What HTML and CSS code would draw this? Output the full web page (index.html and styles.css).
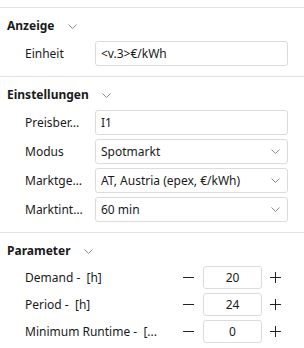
FILE: index.html
```html
<!DOCTYPE html>
<html lang="de">
<head>
    <meta charset="UTF-8">
    <title>Einstellungen</title>
    <link rel="stylesheet" href="styles.css">
</head>
<body>

<div class="panel">
    <div class="section">
        <div class="section-head">
            <span class="section-title">Anzeige</span>
            <svg class="chev" width="9" height="5" viewBox="0 0 9 5"><path d="M0.5 0.5 L4.5 4.5 L8.5 0.5" fill="none" stroke="#8a8a8a" stroke-width="1"/></svg>
        </div>
        <div class="rows">
            <div class="field-row">
                <div class="label">Einheit</div>
                <div class="box">&lt;v.3&gt;€/kWh</div>
            </div>
        </div>
    </div>

    <div class="section">
        <div class="section-head">
            <span class="section-title">Einstellungen</span>
            <svg class="chev" width="9" height="5" viewBox="0 0 9 5"><path d="M0.5 0.5 L4.5 4.5 L8.5 0.5" fill="none" stroke="#8a8a8a" stroke-width="1"/></svg>
        </div>
        <div class="rows">
            <div class="field-row">
                <div class="label">Preisber…</div>
                <div class="box">I1</div>
            </div>
            <div class="field-row">
                <div class="label">Modus</div>
                <div class="box select"><span>Spotmarkt</span><svg width="9" height="5" viewBox="0 0 9 5"><path d="M0.5 0.5 L4.5 4.5 L8.5 0.5" fill="none" stroke="#8a8a8a" stroke-width="1"/></svg></div>
            </div>
            <div class="field-row">
                <div class="label">Marktge…</div>
                <div class="box select"><span>AT, Austria (epex, €/kWh)</span><svg width="9" height="5" viewBox="0 0 9 5"><path d="M0.5 0.5 L4.5 4.5 L8.5 0.5" fill="none" stroke="#8a8a8a" stroke-width="1"/></svg></div>
            </div>
            <div class="field-row">
                <div class="label">Marktint…</div>
                <div class="box select"><span>60 min</span><svg width="9" height="5" viewBox="0 0 9 5"><path d="M0.5 0.5 L4.5 4.5 L8.5 0.5" fill="none" stroke="#8a8a8a" stroke-width="1"/></svg></div>
            </div>
        </div>
    </div>

    <div class="section">
        <div class="section-head">
            <span class="section-title">Parameter</span>
            <svg class="chev" width="9" height="5" viewBox="0 0 9 5"><path d="M0.5 0.5 L4.5 4.5 L8.5 0.5" fill="none" stroke="#8a8a8a" stroke-width="1"/></svg>
        </div>
        <div class="rows params">
            <div class="param-row">
                <div class="param-label">Demand -&nbsp; [h]</div>
                <svg class="minus" width="11" height="11" viewBox="0 0 11 11"><path d="M0 5.5 H11" stroke="#222" stroke-width="1"/></svg>
                <div class="num">20</div>
                <svg class="plus" width="11" height="11" viewBox="0 0 11 11"><path d="M0 5.5 H11 M5.5 0 V11" stroke="#222" stroke-width="1"/></svg>
            </div>
            <div class="param-row">
                <div class="param-label">Period -&nbsp; [h]</div>
                <svg class="minus" width="11" height="11" viewBox="0 0 11 11"><path d="M0 5.5 H11" stroke="#222" stroke-width="1"/></svg>
                <div class="num">24</div>
                <svg class="plus" width="11" height="11" viewBox="0 0 11 11"><path d="M0 5.5 H11 M5.5 0 V11" stroke="#222" stroke-width="1"/></svg>
            </div>
            <div class="param-row">
                <div class="param-label">Minimum Runtime -&nbsp; [...</div>
                <svg class="minus" width="11" height="11" viewBox="0 0 11 11"><path d="M0 5.5 H11" stroke="#222" stroke-width="1"/></svg>
                <div class="num">0</div>
                <svg class="plus" width="11" height="11" viewBox="0 0 11 11"><path d="M0 5.5 H11 M5.5 0 V11" stroke="#222" stroke-width="1"/></svg>
            </div>
        </div>
    </div>
</div>

</body>
</html>
```

FILE: styles.css
```css
body {
    margin: 0;
    background: #ffffff;
    font-family: 'Noto Sans', 'Open Sans', sans-serif;
    font-size: 12px;
    color: #1a1a1a;
}
.panel {
    padding-top: 7px;
}
.section {
    border-top: 1px solid #e3e3e3;
    padding-bottom: 10px;
}
.section-head {
    display: flex;
    align-items: center;
    height: 16px;
    padding: 10px 0 7px 7px;
}
.section-title {
    font-weight: bold;
    line-height: 16px;
}
.chev {
    margin-left: 13px;
}
.rows {
    display: flex;
    flex-direction: column;
    gap: 4px;
    padding-left: 25px;
    padding-right: 16px;
}
.field-row {
    display: flex;
    align-items: center;
    height: 25px;
}
.label {
    width: 63px;
    margin-right: 7px;
    white-space: nowrap;
}
.box {
    flex: 1;
    height: 23px;
    line-height: 23px;
    border: 1px solid #dcdcdc;
    border-radius: 3px;
    padding: 0 6px 0 5px;
    display: flex;
    align-items: center;
    justify-content: space-between;
    white-space: nowrap;
}
.select svg {
    margin-right: 1px;
}
.params {
    padding-right: 23px;
}
.param-row {
    display: flex;
    align-items: center;
    height: 23px;
}
.param-label {
    flex: 1;
    min-width: 0;
    white-space: nowrap;
}
.minus {
    margin: 0 9px 0 10px;
}
.num {
    width: 57px;
    height: 21px;
    line-height: 21px;
    border: 1px solid #dcdcdc;
    border-radius: 3px;
    text-align: center;
    margin-right: 8px;
}
```
